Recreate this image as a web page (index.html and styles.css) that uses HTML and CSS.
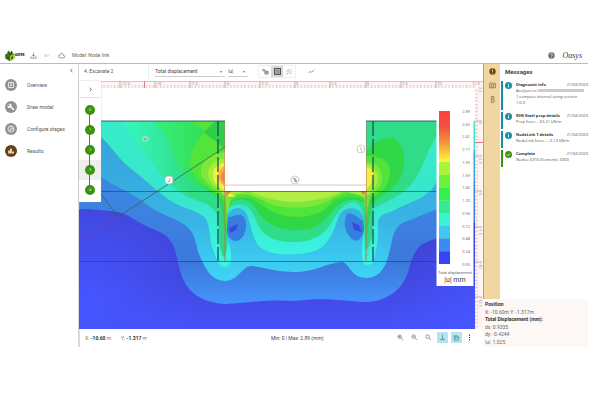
FILE: index.html
```html
<!DOCTYPE html>
<html lang="en">
<head>
<meta charset="utf-8">
<title>Model: Node link</title>
<link rel="stylesheet" href="styles.css">
</head>
<body>
<div class="app">
  <header class="topbar">
    <div class="brand">
      <svg class="logo" viewBox="0 0 20 22"><path d="M1 8l9-3 9 3v9l-9 5-9-5z" fill="#47801c"/><path d="M10 12l9-4v9l-9 5z" fill="#b5c43c"/><path d="M1 8l9 4v10l-9-5z" fill="#356b16"/><path d="M4 5l4-4 2 6 3-6 3 5-6 4z" fill="#25550f"/><path d="M12 14l4-2v5l-4 2z" fill="#356b16"/></svg>
      <span class="brand-name">GOFER</span>
    </div>
    <button class="icon-btn" aria-label="Download"><svg viewBox="0 0 24 24"><path d="M12 3v12M7 10l5 5 5-5M3 15v6h18v-6" class="line"/></svg></button>
    <button class="icon-btn faded" aria-label="Undo"><svg viewBox="0 0 24 24"><path d="M3 7v8h8M3 14c5-6 14-6 18 2" class="line"/></svg></button>
    <button class="icon-btn" aria-label="Cloud"><svg viewBox="0 0 24 24"><path d="M6 20h13a4 4 0 0 0 0-8c0-9-12-10-13-1a4.500 4.500 0 0 0 0 9z" class="line"/></svg></button>
    <h1 class="model-name">Model: Node link</h1>
    <button class="icon-btn help" aria-label="Help"><svg viewBox="0 0 24 24"><circle cx="12" cy="12" r="11" fill="#707070"/><path d="M8.500 9.500c0-5 7-5 7-.5 0 3-3.500 2.500-3.500 6M12 17v2.500" fill="none" stroke="#fff" stroke-width="2.200"/></svg></button>
    <span class="company">Oasys</span>
  </header>

  <div class="body">
    <nav class="sidebar">
      <button class="collapse" aria-label="Collapse menu"><svg viewBox="0 0 8 8"><path d="M5 2L3 4l2 2" class="line thin"/></svg></button>
      <a href="#overview" class="nav-item"><svg class="badge" viewBox="0 0 24 24"><circle cx="12" cy="12" r="12"/><path d="M7 7h10v10H7zM10 10h4M10 13h4" class="mark"/></svg>Overview</a>
      <a href="#draw" class="nav-item"><svg class="badge" viewBox="0 0 24 24"><circle cx="12" cy="12" r="12"/><path d="M11 11l7 7" class="mark thick"/><path d="M7 6l3 3-2 2-3-3c-1 5 3 7 6 5l2-2c1-4-2-6-6-5z" fill="#fff"/></svg>Draw model</a>
      <a href="#stages" class="nav-item"><svg class="badge" viewBox="0 0 24 24"><circle cx="12" cy="12" r="12"/><circle cx="12" cy="12" r="6" class="mark"/><path d="M12 6v6h6M12 12l-3 4" class="mark"/></svg>Configure stages</a>
      <a href="#results" class="nav-item"><svg class="badge active" viewBox="0 0 24 24"><circle cx="12" cy="12" r="12"/><path d="M8 17v-6M12 17V7M16 17v-4" class="mark thick"/></svg>Results</a>
    </nav>

    <main class="workspace">
      <div class="toolbar">
        <span class="stage-name">4. Excavate 2</span>
        <div class="tools">
          <span class="pick wide"><select aria-label="Result type"><option>Total displacement</option></select></span>
          <span class="pick"><select aria-label="Component"><option>|u|</option></select></span>
          <div class="tool-group">
            <button class="tool" aria-label="Nodes"><svg viewBox="0 0 24 24"><path d="M3 5h5v5H3zM10 11h11v10H10zM10 14h11M10 17h11M8 8l5 4" class="line"/></svg></button>
            <button class="tool on" aria-label="Contours"><svg viewBox="0 0 24 24"><path d="M2 2h20v20H2z" class="line thick-line"/><path d="M7 17V8h10v9h-6v-5h3" class="line"/></svg></button>
            <button class="tool" aria-label="Vectors"><svg viewBox="0 0 24 24"><path d="M3 12l7-8M3 21L19 3M13 21l8-9" class="line" stroke-dasharray="6 2"/></svg></button>
          </div>
          <button class="tool" aria-label="Graph"><svg viewBox="0 0 24 24"><path d="M2 18l6-7 4 4L22 6" class="line"/></svg></button>
        </div>
      </div>

      <div class="canvas">
        <div class="stage-rail">
          <button class="expand" aria-label="Expand stages"><svg viewBox="0 0 8 8"><path d="M3 2l2 2-2 2" class="line thin"/></svg></button>
          <ol class="stages">
            <li><button>0</button></li>
            <li><button>1</button></li>
            <li><button>2</button></li>
            <li class="current"><button>3</button></li>
            <li><button>4</button></li>
          </ol>
        </div>

        <svg class="plot" viewBox="79 81 404 248">
          <defs>
            <clipPath id="soil"><path d="M79 121H225V191H366V121H475V329H79z"/></clipPath>
            <linearGradient id="deep" x1="0" y1="0" x2="0" y2="1"><stop offset=".4" stop-color="#4045d8"/><stop offset=".76" stop-color="#4046dc"/><stop offset="1" stop-color="#4653fa"/></linearGradient>
            <radialGradient id="deepLeft" gradientUnits="userSpaceOnUse" cx="90" cy="300" r="110"><stop offset="0" stop-color="#4655ff"/><stop offset="1" stop-color="#4655ff" stop-opacity="0"/></radialGradient>
            <radialGradient id="deepRight" gradientUnits="userSpaceOnUse" cx="475" cy="325" r="90"><stop offset="0" stop-color="#4655ff"/><stop offset="1" stop-color="#4655ff" stop-opacity="0"/></radialGradient>
            <linearGradient id="blue" gradientUnits="userSpaceOnUse" x1="0" y1="190" x2="0" y2="303"><stop offset="0" stop-color="#3c86e2"/><stop offset=".65" stop-color="#3c78dc"/><stop offset="1" stop-color="#4494fb"/></linearGradient>
            <linearGradient id="sky" gradientUnits="userSpaceOnUse" x1="0" y1="140" x2="0" y2="275"><stop offset="0" stop-color="#36a4dc"/><stop offset=".6" stop-color="#38b4e4"/><stop offset="1" stop-color="#3ed2f4"/></linearGradient>
            <linearGradient id="cyan" gradientUnits="userSpaceOnUse" x1="0" y1="121" x2="0" y2="255"><stop offset="0" stop-color="#37ecc8"/><stop offset=".6" stop-color="#38e6cc"/><stop offset="1" stop-color="#3cf4e0"/></linearGradient>
            <linearGradient id="teal" gradientUnits="userSpaceOnUse" x1="120" y1="0" x2="190" y2="0"><stop offset="0" stop-color="#38f8c0"/><stop offset="1" stop-color="#30dc88"/></linearGradient>
            <linearGradient id="green" gradientUnits="userSpaceOnUse" x1="152" y1="0" x2="225" y2="0"><stop offset="0" stop-color="#36f07c"/><stop offset="1" stop-color="#30d848"/></linearGradient>
            <linearGradient id="scale" x1="0" y1="0" x2="0" y2="1"><stop offset="0" stop-color="#ff4040"/><stop offset=".1" stop-color="#f25040"/><stop offset=".22" stop-color="#f0a038"/><stop offset=".32" stop-color="#fff038"/></linearGradient>
            <pattern id="ticksH" width="3.520" height="7" patternUnits="userSpaceOnUse" x="78" y="81"><path d="M1.500 4v3" stroke="#c9a5a5" stroke-width=".6"/></pattern>
            <pattern id="ticksV" width="8" height="3.520" patternUnits="userSpaceOnUse" x="475" y="82"><path d="M0 1.500h3" stroke="#c9a5a5" stroke-width=".6"/></pattern>
          </defs>

          <rect x="79" y="81" width="404" height="248" fill="#fff"/>
          <g clip-path="url(#soil)">
            <rect x="79" y="121" width="396" height="208" fill="url(#deep)"/>
            <rect x="79" y="121" width="150" height="208" fill="url(#deepLeft)"/>
            <rect x="360" y="210" width="115" height="119" fill="url(#deepRight)"/>
            <path fill="url(#blue)" d="M79 209C98 209 108 211 118 212C128 214 137 222 148 227C158 231 167 234 172 243C178 254 178 270 184 281C190 294 205 303 225 304C245 303 270 299 295 301C325 297 340 301 367 302C385 301 397 292 403 283C411 271 409 258 419 247C425 240 450 236 475 222V121H79z"/>
            <path fill="url(#sky)" d="M79 158L101 177C110 184 127 190 141 200C154 211 166 215 178 221C199 231 193 243 202 261C207 272 214 281 225 281C240 280 242 265 252 266C268 268 275 272 297 272C315 272 326 263 342 262C350 263 350 278 367 278C385 277 388 259 392 240C397 220 404 224 417 217L437 209L475 180V121H79z"/>
            <path fill="url(#cyan)" d="M79 110L101 137C112 147 117 157 130 168C145 179 155 190 171 201C185 210 199 210 206 219C211 229 209 242 214 252C217 260 218 267 225 267C232 266 232 255 230 247L227 238V216C231 207 241 205 246 213C252 225 252 240 260 247C269 254 281 255 297 254C313 253 323 249 329 239C338 226 336 216 343 211C351 205 362 209 364 218C366 232 361 239 362 257C363 267 369 267 373 262C376 252 379 240 378 225C378 212 387 215 398 208C417 200 432 195 437 180L475 150V121H79z"/>
            <path fill="url(#teal)" d="M122 121C134 134 136 145 148 158C160 171 167 185 183 194C199 203 210 202 216 213C221 225 216 248 224 257C231 245 226 226 227 211C232 203 242 203 248 207C256 215 257 229 266 235C276 242 286 242 297 242C313 241 322 236 330 225C337 214 341 203 354 202C366 205 364 224 365 249C372 252 373 222 374 208C386 202 404 195 414 181C426 163 427 149 438 134V116H122z"/>
            <path fill="url(#green)" d="M152 121C164 131 171 143 174 155C179 168 184 177 196 184C209 192 216 193 222 206L226 242L228 205C238 197 248 198 255 207C263 221 274 230 297 230C319 230 326 219 334 209C343 199 357 197 365 204L366 240L371 205C380 196 398 188 402 174C408 157 401 137 390 138C376 139 371 147 366 150V121z"/>
            <path fill="#52e43a" d="M186 121C197 126 202 128 204 132C192 145 186 160 193 173C201 185 212 189 223 200L226 230L229 202C242 194 252 197 262 205C273 213 282 217 297 217C315 217 325 210 332 203C341 195 356 194 364 200L366 225L370 199C383 192 391 182 390 171C390 162 381 155 366 156V100L225 121V145C217 138 210 135 204 131C209 127 212 125 215 121z"/>
            <path fill="#2fce48" d="M204 132C208 128 212 125 215 121H225V148C216 142 208 136 204 132z"/>
            <path fill="#7de83a" d="M225 153C211 151 200 163 201 174C204 183 214 188 224 196L227 215L231 198C246 191 253 197 263 200C274 210 316 210 330 200C344 190 354 190 364 197L366 215L370 195C381 189 385 180 380 170C377 165 373 162 366 162z"/>
            <path fill="#a5ef3b" d="M225 159C214 159 208 167 208 174C209 184 217 187 225 195H231L249 191C270 205 319 205 344 191L366 197C376 189 381 179 376 171C373 166 371 165 366 164z"/>
            <path fill="#f2ee43" d="M225 163C216 164 213 169 213 175C214 184 219 188 225 191L236 196C228 200 225 193 225 190M366 167C376 169 375 180 366 190z"/>
            <path fill="#fbb044" d="M225 165C216 171 216 180 225 187z"/>
            <path fill="#f98445" d="M225 170C219 174 220 180 225 184zM225 190H232L227 196z"/>
            <path fill="#ed7938" d="M366 190H359L364 195z"/>
            <path fill="#b5ee45" d="M250 191H342C326 195 315 202 295 202C277 202 265 195 250 191z"/>
            <g fill="#367ede"><path d="M228 217C235 217 239 212 244 217C249 228 244 239 237 241C230 242 226 234 227 227z"/><path d="M363 221C357 217 351 211 347 214C342 223 346 235 353 240C360 243 364 234 364 229z"/></g>
            <path fill="#3b49df" d="M229 228L238 224 236 230 230 233zM352 222l7 3 3 7-8-2z"/>
            <g fill="none" stroke="#31945a" stroke-width=".5" opacity=".4"><path d="M221 191V250M223 194V258M368 194V256M371 194V250M228 199C243 190 253 198 264 203M363 199C351 190 340 197 329 203"/></g>
            <path d="M225 121V261M366 121V261" stroke="#a87561" stroke-width="1.200" opacity=".8"/>
            <path d="M225 153V190" stroke="#fb9a64"/>
          </g>

          <g fill="none" stroke="#184450" stroke-width=".8">
            <path d="M79 121H225M366 121H437"/>
            <path d="M79 191.500H437M79 261.500H437" opacity=".75"/>
            <path d="M218 121V261M373 121V261" stroke-width="1.200" stroke-dasharray="15 3"/>
            <path d="M225 147L118 217M101 194L118 217" stroke="#355b43" opacity=".9"/>
            <path d="M118 217L79 242" stroke="#8c35a0" opacity=".7"/>
            <path d="M225 185H366" stroke="#d7b9ad"/>
          </g>
          <path d="M79 121V210" stroke="#8ec9e5" stroke-width=".6"/>
          <g class="node-tags">
            <circle cx="169" cy="180" r="4"/><text x="169" y="182" fill="#d5252f">J</text>
            <g opacity=".45"><circle cx="145.500" cy="139" r="3"/><text x="145.500" y="140.500">n</text></g>
            <circle cx="295" cy="180" r="4"/><text x="295" y="182">%</text>
            <circle cx="361" cy="149" r="4"/><text x="361" y="151" fill="#397f23">\</text>
          </g>

          <rect x="101" y="81" width="382" height="7" fill="#fff4f3"/>
          <rect x="475" y="88" width="8" height="241" fill="#fff4f3"/>
          <rect x="101" y="81" width="374" height="7" fill="url(#ticksH)"/>
          <rect x="475" y="88" width="8" height="241" fill="url(#ticksV)"/>
          <path d="M101 81.300H483" stroke="#aaa" stroke-width=".7"/>
          <path d="M120 81v7M155 81v7M190 81v7M225 81v7M260 81v7M295 81v7M330 81v7M366 81v7M401 81v7M436 81v7M475 121h7M475 156h7M475 191h7M475 227h7M475 262h7M475 297h7" stroke="#9b8585" stroke-width=".6"/>
          <path d="M144.500 81v7M475 142.500h8" stroke="#d95c6a" stroke-width=".8"/>
          <g class="ruler-text">
            <text x="121" y="84.500">-12.5</text><text x="156" y="84.500">-10</text><text x="191" y="84.500">-7.5</text><text x="226" y="84.500">-5</text><text x="261" y="84.500">-2.5</text><text x="296" y="84.500">0</text><text x="331" y="84.500">2.5</text><text x="367" y="84.500">5</text><text x="402" y="84.500">7.5</text><text x="437" y="84.500">10</text><text x="472" y="84.500">12.5</text>
            <text transform="translate(479 87) rotate(90)">2.5</text><text transform="translate(479 122) rotate(90)">0</text><text transform="translate(479 157) rotate(90)">-2.5</text><text transform="translate(479 192) rotate(90)">-5</text><text transform="translate(479 228) rotate(90)">-7.5</text><text transform="translate(479 263) rotate(90)">-10</text><text transform="translate(479 298) rotate(90)">-12.5</text>
          </g>

          <g class="legend">
            <rect x="436.500" y="109" width="37" height="177" fill="#fff"/>
            <rect x="439" y="111" width="11" height="153" fill="url(#scale)"/>
            <path fill="#a5f53d" d="M439 162h11v12.750h-11z"/>
            <path fill="#6cf03a" d="M439 174.750h11v12.750h-11z"/>
            <path fill="#35f04c" d="M439 187.500h11v12.750h-11z"/>
            <path fill="#33eb92" d="M439 200.250h11v13h-11z"/>
            <path fill="#3af5d4" d="M439 213h11v13h-11z"/>
            <path fill="#3dc8f5" d="M439 225.750h11v13h-11z"/>
            <path fill="#3c8bf2" d="M439 238.500h11v13h-11z"/>
            <path fill="#3744f5" d="M439 251.250h11V264h-11z"/>
            <g class="values">
              <text x="470" y="113">2.89</text><text x="470" y="126">2.65</text><text x="470" y="138">2.41</text><text x="470" y="151">2.17</text><text x="470" y="164">1.93</text><text x="470" y="177">1.69</text><text x="470" y="189">1.45</text><text x="470" y="202">1.20</text><text x="470" y="215">0.96</text><text x="470" y="228">0.72</text><text x="470" y="240">0.48</text><text x="470" y="253">0.24</text><text x="470" y="266">0.00</text>
            </g>
            <text x="455" y="274" class="legend-name">Total displacement</text>
            <text x="455" y="282" class="legend-unit">|u| mm</text>
          </g>
        </svg>
      </div>

      <footer class="status">
        <span class="coord">X: <b>-10.60</b> m</span>
        <span class="coord">Y: <b>-1.317</b> m</span>
        <span class="range">Min: 0 | Max: 2.89 (mm)</span>
        <div class="view-tools">
          <button class="view" aria-label="Zoom in"><svg viewBox="0 0 24 24"><circle cx="9" cy="9" r="6" class="line"/><path d="M14 14l7 7M6 9h6M9 6v6" class="line"/></svg></button>
          <button class="view" aria-label="Zoom out"><svg viewBox="0 0 24 24"><circle cx="9" cy="9" r="6" class="line"/><path d="M14 14l7 7M6 9h6" class="line"/></svg></button>
          <button class="view" aria-label="Zoom to fit"><svg viewBox="0 0 24 24"><circle cx="9" cy="9" r="6" class="line"/><path d="M14 14l7 7" class="line"/></svg></button>
          <button class="view on" aria-label="Show axes"><svg viewBox="0 0 24 24"><path d="M12 2v13M12 15l-8 5M12 15l8 5M8 20h8" class="line"/></svg></button>
          <button class="view on" aria-label="Show rulers"><svg viewBox="0 0 24 24"><path d="M4 3v18h18M8 17V6h6v11M14 10h5v7" class="line"/></svg></button>
          <button class="view slim" aria-label="More"><svg viewBox="0 0 24 24"><circle cx="12" cy="4" r="2"/><circle cx="12" cy="12" r="2"/><circle cx="12" cy="20" r="2"/></svg></button>
        </div>
      </footer>
    </main>

    <aside class="side">
      <div class="side-top">
        <div class="tabs">
          <button aria-label="Messages"><svg viewBox="0 0 24 24"><circle cx="12" cy="12" r="11" fill="#6e4514"/><path d="M12 5v8M12 16v3" stroke="#f0d6a0" stroke-width="3"/></svg></button>
          <button aria-label="Display"><svg viewBox="0 0 24 24"><path d="M2 4h20v16H2zM6 9h12M6 13h5M14 13h4M6 17h12" class="line brown"/></svg></button>
          <button aria-label="Properties"><svg viewBox="0 0 24 24"><path d="M8 2h9v20H8zM11 6h3M11 10h3M11 14h3" class="line brown"/></svg></button>
        </div>
        <section class="messages">
          <h2>Messages</h2>
          <article class="msg"><svg class="msg-icon" viewBox="0 0 24 24"><circle cx="12" cy="12" r="12"/><path d="M12 5v3M12 10v9" class="mark thick"/></svg><div class="msg-body"><div class="msg-head"><b>Diagnostic info</b><time>21/04/2023</time></div><p>Analysis on <span class="redacted"></span><br>1.compute.internal using version<br>1.0.0</p></div></article>
          <article class="msg"><svg class="msg-icon" viewBox="0 0 24 24"><circle cx="12" cy="12" r="12"/><path d="M12 5v3M12 10v9" class="mark thick"/></svg><div class="msg-body"><div class="msg-head"><b>RHS Steel prop details</b><time>21/04/2023</time></div><p>Prop force = 65.21 kN/m</p></div></article>
          <article class="msg"><svg class="msg-icon" viewBox="0 0 24 24"><circle cx="12" cy="12" r="12"/><path d="M12 5v3M12 10v9" class="mark thick"/></svg><div class="msg-body"><div class="msg-head"><b>NodeLink 1 details</b><time>21/04/2023</time></div><p>NodeLink force = -6.10 kN/m</p></div></article>
          <article class="msg done"><svg class="msg-icon" viewBox="0 0 24 24"><circle cx="12" cy="12" r="12"/><path d="M6 12l4 4 8-8" class="mark thick"/></svg><div class="msg-body"><div class="msg-head"><b>Complete</b><time>21/04/2023</time></div><p>Nodes: 6916 Elements: 3403</p></div></article>
        </section>
      </div>
      <section class="readout">
        <b>Position</b>
        <span>X: -10.60m Y: -1.317m</span>
        <b>Total Displacement (mm):</b>
        <span>dx: 0.9335</span>
        <span>dy: -0.4244</span>
        <span>|u|: 1.025</span>
      </section>
    </aside>
  </div>
</div>
</body>
</html>
```
FILE: styles.css
```css
* { box-sizing: border-box; }
body { margin: 0; background: #fff; color: #444; font: 5px/7px Roboto, "Liberation Sans", sans-serif; }
button, select { font: inherit; color: inherit; border: 0; background: none; padding: 0; margin: 0; }
h1, h2, p, ol { margin: 0; padding: 0; font-size: inherit; font-weight: normal; }
svg { display: block; }
.line { fill: none; stroke: #555; stroke-width: 2; }
.thin { stroke-width: 1; }
.thick-line { stroke-width: 4; }
.mark { fill: none; stroke: #fff; stroke-width: 1.5; }
.thick { stroke-width: 3; }

.app { padding-top: 48px; padding-right: 12px; }
.topbar { display: flex; align-items: center; height: 16px; padding: 0 6px 0 5px; border-bottom: 1px solid #bbb; }
.brand { display: flex; align-items: center; width: 25px; }
.logo { width: 10px; height: 11px; }
.brand-name { font-size: 3px; font-weight: 900; color: #111; }
.icon-btn { width: 7px; height: 7px; margin-right: 7px; }
.icon-btn svg { width: 7px; height: 7px; }
.faded { opacity: .4; }
.model-name { color: #666; white-space: nowrap; }
.help { margin-left: auto; }
.company { font: italic 8px/10px "Liberation Serif", serif; color: #2d3d55; }

.body { display: grid; grid-template-columns: 79px minmax(0, 1fr) 105px; }
.sidebar { border-right: 1px solid #d5d5d5; display: flex; flex-direction: column; align-items: stretch; }
.collapse { align-self: flex-end; margin: 3px 3px 0 0; }
.collapse svg, .expand svg { width: 7px; height: 7px; }
.nav-item { display: flex; align-items: center; gap: 10px; height: 22px; padding-left: 5px; color: #555; text-decoration: none; white-space: nowrap; }
.badge { width: 12px; height: 12px; fill: #929292; flex: none; }
.badge.active { fill: #6b3d14; }

.workspace { min-width: 0; }
.toolbar { display: flex; align-items: stretch; height: 17px; }
.stage-name { width: 70px; padding: 4px 5px; border-right: 1px solid #eee; color: #555; white-space: nowrap; }
.tools { display: flex; align-items: center; padding-left: 6px; padding-bottom: 2px; }
.pick { position: relative; width: 20px; margin-right: 3px; border-bottom: 1px solid #ccc; height: 10px; }
.pick.wide { width: 70px; }
.pick select { appearance: none; width: 100%; line-height: 8px; display: block; }
.pick::after { content: ""; position: absolute; right: 3px; top: 4px; border: 1px solid transparent; border-top: 2px solid #777; }
.tool-group { display: flex; margin: 0 9px 0 7px; border: 1px solid #eee; }
.tool { width: 12px; height: 11px; display: grid; place-items: center; }
.tool svg { width: 7px; height: 7px; }
.tool.on { background: #d9d6d3; }

.canvas { position: relative; }
.plot { width: 100%; height: auto; }
.plot text { font-family: Roboto, "Liberation Sans", sans-serif; }
.node-tags circle { fill: #fff; stroke: #ccc; stroke-width: 1; }
.node-tags text { font-size: 5px; text-anchor: middle; }
.ruler-text text { font-size: 4px; fill: #a09090; }
.values text { font-size: 4px; fill: #777; text-anchor: end; }
.legend-name { font-size: 4px; fill: #666; text-anchor: middle; }
.legend-unit { font-size: 7px; fill: #333; text-anchor: middle; }

.stage-rail { position: absolute; left: 0; top: 0; width: 22px; background: #fff; box-shadow: 0 0 1px #999; padding-bottom: 2px; }
.expand { width: 100%; height: 17px; display: grid; place-items: center; border-bottom: 1px solid #e5e5e5; }
.stages { list-style: none; padding-top: 2px; }
.stages li { position: relative; height: 20px; display: grid; place-items: center; }
.stages li.current { background: #eee; }
.stages li + li::before { content: ""; position: absolute; width: 1px; height: 12px; top: -6px; left: 10px; background: #3b930d; }
.stages button { position: relative; width: 10px; height: 10px; border-radius: 50%; background: #3b930d; color: #d7f0c5; font-size: 4px; line-height: 10px; }

.status { display: flex; align-items: center; height: 18px; padding: 0 9px 0 5px; border-left: 1px solid #ddd; white-space: nowrap; }
.coord { width: 36px; color: #777; }
.coord b { color: #333; }
.range { margin: 0 auto 0 114px; }
.view-tools { display: flex; align-items: center; gap: 3px; }
.view { width: 11px; height: 11px; display: grid; place-items: center; margin-bottom: 2px; }
.view svg { width: 7px; height: 7px; }
.view.on { background: #b7e3ea; }
.view.on .line { stroke: #147a8c; }
.view.slim { width: 9px; }

.side { display: flex; flex-direction: column; }
.side-top { display: flex; height: 235px; }
.tabs { width: 17px; background: #f0d6a0; border-left: 1px solid #b5a17c; padding-top: 3px; }
.tabs button { display: grid; place-items: center; width: 100%; height: 14px; padding-bottom: 6px; }
.tabs svg { width: 7px; height: 7px; }
.brown { stroke: #6d5940; }
.messages { flex: 1; min-width: 0; padding: 4px 0 0 1px; }
.messages h2 { padding-left: 4px; margin-bottom: 5px; font-size: 6px; line-height: 8px; font-weight: 700; color: #444; }
.msg { display: flex; gap: 4px; border-left: 2px solid #168fa5; padding: 1px 0 4px 2px; margin-bottom: 2px; }
.msg.done { border-color: #3b930d; }
.msg-icon { width: 7px; height: 7px; fill: #168fa5; flex: none; }
.done .msg-icon { fill: #3b930d; }
.msg-body { flex: 1; min-width: 0; font: 4px/6px "Open Sans", "Noto Sans", sans-serif; white-space: nowrap; color: #555; }
.msg-head { display: flex; justify-content: space-between; }
.msg-head b { color: #333; }
.redacted { display: inline-block; width: 46px; height: 3px; background: #ccc; }
.readout { display: flex; flex: 1; flex-direction: column; justify-content: space-between; padding: 2px 0 1px 2px; background: #fdf7f6; color: #666; line-height: 7px; white-space: nowrap; }
.readout b { color: #333; }
```
